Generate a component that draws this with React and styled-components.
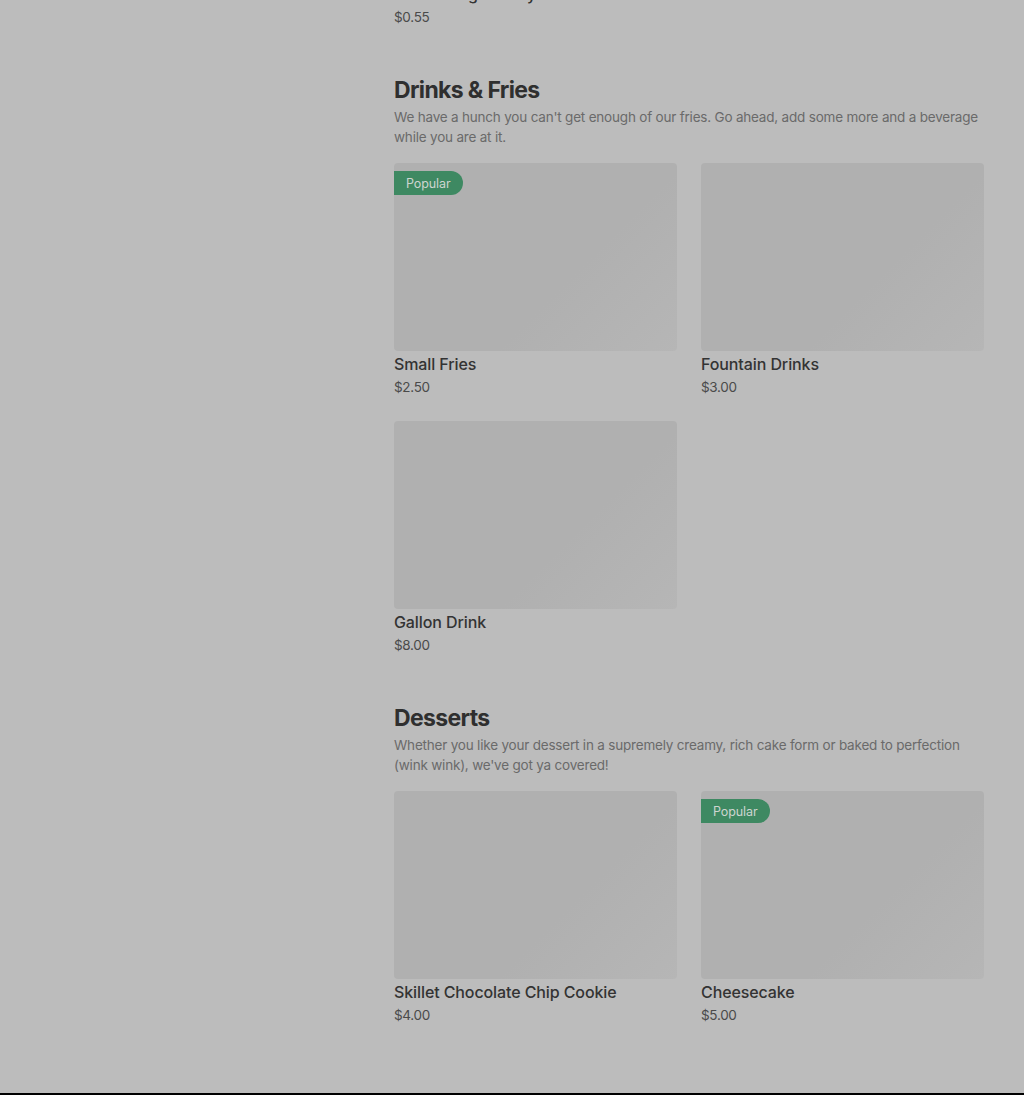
import React from "react"
import styled, { createGlobalStyle } from "styled-components"

const GlobalStyle = createGlobalStyle`
  html, body {
    margin: 0;
    padding: 0;
    background: #bcbcbc;
  }
  body {
    font-family: Inter, "Noto Sans", "Liberation Sans", sans-serif;
    height: 1095px;
    overflow: hidden;
  }
`

const Page = styled.div`
  height: 1095px;
  display: flex;
  flex-direction: column;
  background: #bcbcbc;
`

const Wrapper = styled.main`
  flex: 1;
  display: flex;
  padding-left: 394px;
  padding-right: 40px;
  overflow: hidden;
`

const Menu = styled.div`
  width: 590px;
  margin-top: -19px;
`

const Section = styled.section`
  margin-bottom: 48px;
`

const Heading = styled.h2`
  margin: 0 0 3px;
  font-size: 23px;
  line-height: 28px;
  font-weight: 700;
  letter-spacing: -0.65px;
  color: #2f2f2f;
`

const Description = styled.p`
  margin: 0 0 16px;
  font-size: 13.5px;
  line-height: 20px;
  color: #6a6a6a;
  letter-spacing: -0.2px;
`

const Grid = styled.div`
  display: grid;
  grid-template-columns: 283px 283px;
  column-gap: 24px;
  row-gap: 23px;
`

const Card = styled.div`
  display: flex;
  flex-direction: column;
`

const Thumb = styled.div`
  position: relative;
  height: 188px;
  border-radius: 4px;
  background: linear-gradient(135deg, #b0b0b0 0%, #b0b0b0 62%, #b6b6b6 100%);
`

const Badge = styled.span`
  position: absolute;
  top: ${(p) => p.$top}px;
  left: 0;
  height: 24px;
  padding: 0 12px 0 12px;
  display: flex;
  align-items: center;
  background: #3e8962;
  color: #cdd5d0;
  font-size: 12.5px;
  letter-spacing: -0.1px;
  border-radius: 0 12px 12px 0;
`

const ItemTitle = styled.div`
  margin-top: 2px;
  font-size: 16px;
  line-height: 22px;
  font-weight: 500;
  color: #333333;
  letter-spacing: -0.1px;
`

const Price = styled.div`
  margin-top: 1px;
  font-size: 13.5px;
  line-height: 22px;
  color: #4a4a4a;
  letter-spacing: -0.3px;
`

const Footer = styled.div`
  height: 2px;
  background: #000;
`

const sections = [
  {
    title: "Drinks & Fries",
    description:
      "We have a hunch you can't get enough of our fries. Go ahead, add some more and a beverage while you are at it.",
    items: [
      { name: "Small Fries", price: "$2.50", popular: true, badgeTop: 8 },
      { name: "Fountain Drinks", price: "$3.00" },
      { name: "Gallon Drink", price: "$8.00" },
    ],
  },
  {
    title: "Desserts",
    description:
      "Whether you like your dessert in a supremely creamy, rich cake form or baked to perfection (wink wink), we've got ya covered!",
    items: [
      { name: "Skillet Chocolate Chip Cookie", price: "$4.00" },
      { name: "Cheesecake", price: "$5.00", popular: true, badgeTop: 8 },
    ],
  },
]

function MenuItem({ item }) {
  return (
    <Card>
      {item.thumb !== false && (
        <Thumb>{item.popular && <Badge $top={item.badgeTop}>Popular</Badge>}</Thumb>
      )}
      <ItemTitle>{item.name}</ItemTitle>
      <Price>{item.price}</Price>
    </Card>
  )
}

export default function App() {
  return (
    <>
      <GlobalStyle />
      <Page>
        <Wrapper>
          <Menu>
            {/* tail of the previous section, scrolled mostly out of view */}
            <Section>
              <Grid>
                <MenuItem item={{ name: "Whataburger Patty", price: "$0.55", thumb: false }} />
              </Grid>
            </Section>
            {sections.map((section) => (
              <Section key={section.title}>
                <Heading>{section.title}</Heading>
                <Description>{section.description}</Description>
                <Grid>
                  {section.items.map((item) => (
                    <MenuItem key={item.name} item={item} />
                  ))}
                </Grid>
              </Section>
            ))}
          </Menu>
        </Wrapper>
        <Footer />
      </Page>
    </>
  )
}
